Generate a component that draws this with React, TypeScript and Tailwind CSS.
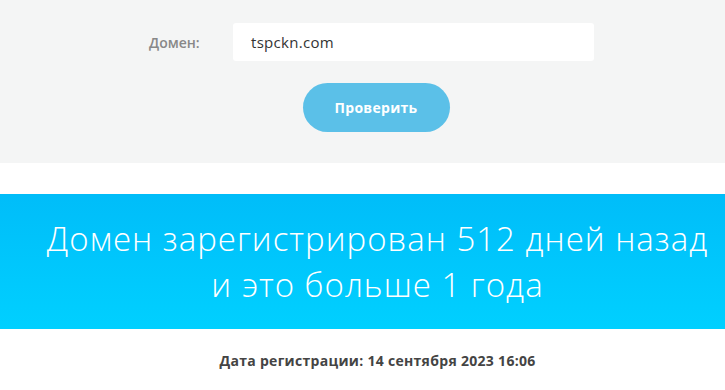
export default function App() {
  return (
    <div className="w-[725px] h-[390px] overflow-hidden bg-white font-['Open_Sans',sans-serif]">
      <section className="bg-[#f4f5f5] h-[163px] pt-[23px]">
        <div className="flex items-center">
          <label className="w-[233px] pl-[149px] text-[14px] font-semibold text-[#888]">Домен:</label>
          <div className="w-[361px] h-[38px] bg-white rounded-[3px] flex items-center pl-[18px] text-[15px] tracking-[0.3px] text-[#333]">
            tspckn.com
          </div>
        </div>
        <div className="flex justify-center pl-[27px] mt-[22px]">
          <button className="w-[147px] h-[49px] rounded-full bg-[#5bc0e8] text-white text-[14px] tracking-[0.3px] font-bold">
            Проверить
          </button>
        </div>
      </section>
      <div className="h-[31px]" />
      <section className="h-[135px] bg-gradient-to-b from-[#00bdf9] to-[#00d0ff] flex flex-col items-center justify-center pl-[30px] text-white font-light text-[33px] leading-[46px] tracking-[1px]">
        <p>Домен зарегистрирован 512 дней назад</p>
        <p>и это больше 1 года</p>
      </section>
      <p className="text-center pl-[30px] mt-[21px] text-[14px] tracking-[0.3px] font-bold text-[#444]">
        Дата регистрации: 14 сентября 2023 16:06
      </p>
    </div>
  );
}
